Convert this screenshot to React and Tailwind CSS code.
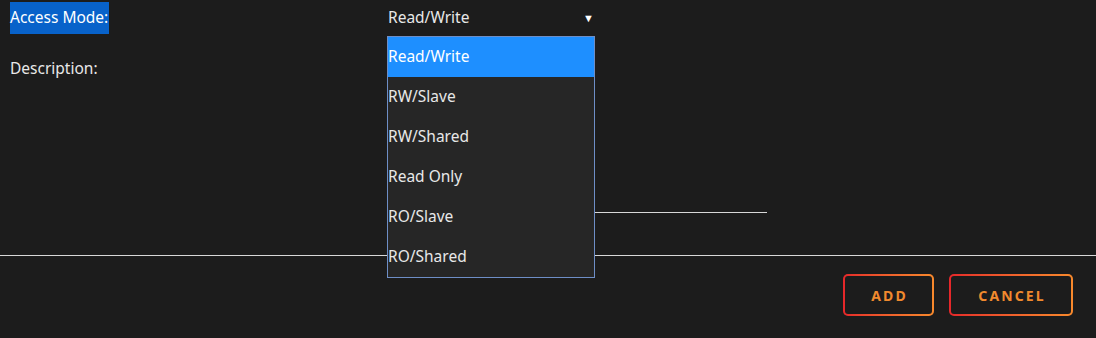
import React from "react";

const items = ["Read/Write", "RW/Slave", "RW/Shared", "Read Only", "RO/Slave", "RO/Shared"];

function GradButton({ label, w }) {
  return (
    <div className={`rounded-[5px] bg-gradient-to-r from-[#e5262a] to-[#f8892c] p-[2px] ${w} h-[42px]`}>
      <div className="w-full h-full rounded-[3px] bg-[#1c1c1c] flex items-center justify-center text-[#f08a2e] text-[14px] font-bold tracking-[0.15em] pl-[2px]">
        {label}
      </div>
    </div>
  );
}

export default function App() {
  return (
    <div
      className="relative w-[1096px] h-[338px] bg-[#1c1c1c] text-[#e8e8e8] text-[15.5px] overflow-hidden"
      style={{ fontFamily: '"Noto Sans", "Open Sans", sans-serif' }}
    >
      <div className="flex h-[36px]">
        <div className="w-[388px] pl-[10px] pt-[2px]">
          <span className="inline-block h-[32px] leading-[31px] bg-[#0862ca] text-white pr-[1px]">Access Mode:</span>
        </div>
        <div className="w-[207px] flex items-center justify-between">
          <span>Read/Write</span>
          <span className="text-[11px] text-white pr-[1px]">▼</span>
        </div>
      </div>
      <div className="flex">
        <div className="w-[388px] pl-[10px] pt-[20px] leading-[24px]">Description:</div>
        <div className="w-[379px] h-[177px] border-b border-[#d8d8d8]"></div>
      </div>
      <div className="mt-[42px] h-px bg-[#d8d8d8]"></div>
      <div className="flex justify-end gap-[15px] pr-[23px] pt-[18px]">
        <GradButton label="ADD" w="w-[91px]" />
        <GradButton label="CANCEL" w="w-[124px]" />
      </div>

      <div className="absolute left-[387px] top-[36px] w-[208px] border border-[#6e8ec6] bg-[#262626]">
        {items.map((it, i) => (
          <div
            key={it}
            className={`h-[40px] flex items-center ${i === 0 ? "bg-[#1e8fff] text-white" : "text-[#e8e8e8]"}`}
          >
            {it}
          </div>
        ))}
      </div>
    </div>
  );
}
